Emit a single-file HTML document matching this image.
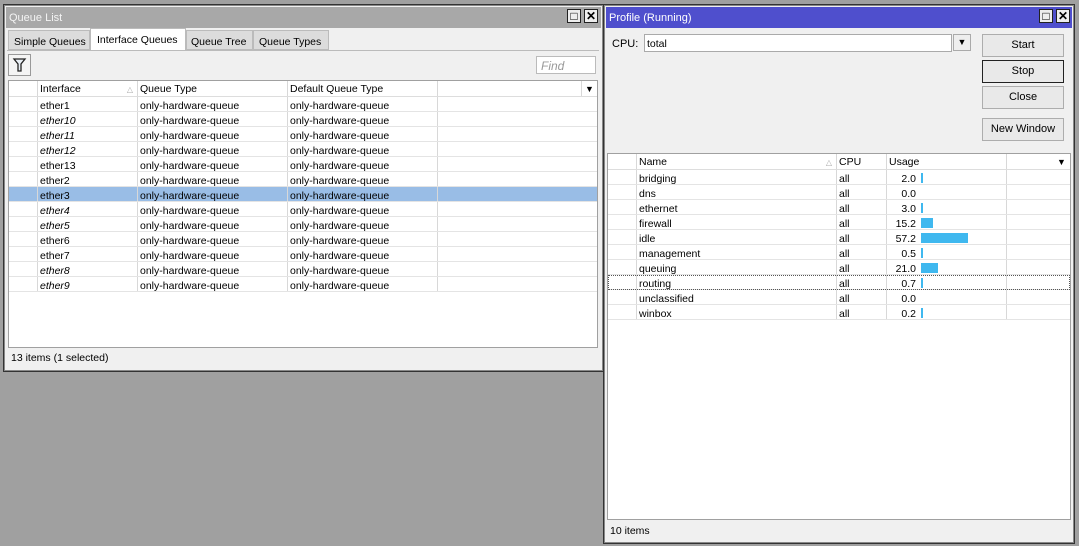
<!DOCTYPE html>
<html><head><style>
*{margin:0;padding:0;box-sizing:border-box}
body{width:1079px;height:546px;background:#a0a0a0;position:relative;overflow:hidden;font-family:"Liberation Sans",sans-serif;font-size:10.5px;color:#000}
.a{position:absolute;white-space:nowrap}
.win{position:absolute;background:#f0f0f0;border:1px solid #333;box-shadow:inset 0 0 0 1px #888}
.tb{position:absolute;left:2px;right:2px;top:2px;height:21px;color:#fff;font-size:11px;padding:5px 0 0 3px}
.wb{position:absolute;top:4px;width:14px;height:14px;border:1px solid #222;background:#eee;font-size:12px;line-height:12px;text-align:center;color:#000;font-weight:bold}
.tbl{position:absolute;background:#fff;border:1px solid #a0a0a0}
.hd{position:absolute;left:0;right:0;top:0;height:16px;background:#fff;border-bottom:1px solid #ddd}
.c{position:absolute;top:0;height:100%;border-left:1px solid #d8d8d8;padding:2px 0 0 2px;white-space:nowrap;overflow:hidden}
.r{position:absolute;left:0;right:0;height:15px;border-bottom:1px solid #e4e4e4}
.r .c{padding-top:3px}
.i{font-style:italic}
.btn{position:absolute;left:982px;width:82px;height:23px;border:1px solid #adadad;background:#e9e9e9;text-align:center;line-height:21px;font-size:11px}
.bar{position:absolute;top:3px;height:10px;background:#3fb8ef}
</style></head><body>

<div class="win" style="left:3px;top:4px;width:601px;height:368px">
 <div class="tb" style="background:#a8a8a8;color:#f4f4f4">Queue List</div>
 <div class="wb" style="left:563px">□</div><div class="wb" style="left:580px">✕</div>
</div>
<div class="a" style="left:8px;top:30px;width:82px;height:20px;background:#dcdcdc;border:1px solid #bbb;padding:5px 0 0 5px">Simple Queues</div>
<div class="a" style="left:90px;top:28px;width:96px;height:23px;background:#fff;border:1px solid #bbb;border-bottom:none;padding:5px 0 0 6px">Interface Queues</div>
<div class="a" style="left:186px;top:30px;width:67px;height:20px;background:#dcdcdc;border:1px solid #bbb;padding:5px 0 0 4px">Queue Tree</div>
<div class="a" style="left:253px;top:30px;width:76px;height:20px;background:#dcdcdc;border:1px solid #bbb;padding:5px 0 0 5px">Queue Types</div>
<div class="a" style="left:7px;top:50px;width:592px;height:1px;background:#bbb"></div>
<div class="a" style="left:8px;top:54px;width:23px;height:22px;border:1px solid #999;background:#f4f4f4">
 <svg width="21" height="20" viewBox="0 0 21 20"><path d="M5 4h11l-4 5v7h-3V9z" fill="#e8eef4" stroke="#222" stroke-width="1.3"/></svg></div>
<div class="a" style="left:536px;top:56px;width:60px;height:18px;background:#fff;border:1px solid #bbb;color:#999;font-style:italic;padding:2px 0 0 4px;font-size:12px">Find</div>

<div class="tbl" style="left:8px;top:80px;width:590px;height:268px">
 <div class="hd">
  <div class="c" style="left:0;width:28px;border:none"></div>
  <div class="c" style="left:28px;width:100px">Interface<span style="position:absolute;right:4px;color:#aaa;font-size:8px;top:4px">△</span></div>
  <div class="c" style="left:128px;width:150px">Queue Type</div>
  <div class="c" style="left:278px;width:150px">Default Queue Type</div>
  <div class="c" style="left:428px;width:144px"></div>
  <div class="c" style="left:572px;width:17px;font-size:9px;padding:3px 0 0 3px">▼</div>
 </div>
 <div id="lrows"></div>
</div>
<div class="a" style="left:11px;top:352px">13 items (1 selected)</div>

<div class="win" style="left:603px;top:4px;width:472px;height:540px">
 <div class="tb" style="background:#4f4fcd">Profile (Running)</div>
 <div class="wb" style="left:435px">□</div><div class="wb" style="left:452px">✕</div>
</div>
<div class="a" style="left:612px;top:38px;font-size:11px">CPU:</div>
<div class="a" style="left:644px;top:34px;width:308px;height:18px;background:#fff;border:1px solid #aaa;padding:3px 0 0 2px">total</div>
<div class="a" style="left:953px;top:34px;width:18px;height:17px;border:1px solid #aaa;background:#eee;text-align:center;font-size:9px;line-height:15px">▼</div>
<div class="btn" style="top:34px">Start</div>
<div class="btn" style="top:60px;border:1px solid #222">Stop</div>
<div class="btn" style="top:86px">Close</div>
<div class="btn" style="top:118px">New Window</div>

<div class="tbl" style="left:607px;top:153px;width:464px;height:367px">
 <div class="hd">
  <div class="c" style="left:0;width:28px;border:none"></div>
  <div class="c" style="left:28px;width:200px">Name<span style="position:absolute;right:4px;color:#aaa;font-size:8px;top:4px">△</span></div>
  <div class="c" style="left:228px;width:50px">CPU</div>
  <div class="c" style="left:278px;width:120px">Usage</div>
  <div class="c" style="left:398px;width:47px"></div>
  <div class="c" style="left:445px;width:18px;font-size:9px;padding:3px 0 0 4px;border:none">▼</div>
 </div>
 <div id="rrows"></div>
</div>
<div class="a" style="left:610px;top:525px">10 items</div>

<script>
var L=[["ether1",0],["ether10",1],["ether11",1],["ether12",1],["ether13",0],["ether2",0],["ether3",0,1],["ether4",1],["ether5",1],["ether6",0],["ether7",0],["ether8",1],["ether9",1]];
var h="";
L.forEach(function(r,i){
 h+='<div class="r" style="top:'+(16+i*15)+'px;'+(r[2]?'background:#99bde6':'')+'"><div class="c" style="left:0;width:28px;border:none"></div><div class="c'+(r[1]?' i':'')+'" style="left:28px;width:100px">'+r[0]+'</div><div class="c" style="left:128px;width:150px">only-hardware-queue</div><div class="c" style="left:278px;width:150px">only-hardware-queue</div><div class="c" style="left:428px;width:161px"></div></div>';
});
document.getElementById("lrows").innerHTML=h;
var R=[["bridging","2.0",2],["dns","0.0",0],["ethernet","3.0",2],["firewall","15.2",12],["idle","57.2",47],["management","0.5",2],["queuing","21.0",17],["routing","0.7",2,1],["unclassified","0.0",0],["winbox","0.2",2]];
h="";
R.forEach(function(r,i){
 h+='<div class="r" style="top:'+(16+i*15)+'px;'+(r[3]?'outline:1px dotted #555;outline-offset:-1px':'')+'"><div class="c" style="left:0;width:28px;border:none"></div><div class="c" style="left:28px;width:200px">'+r[0]+'</div><div class="c" style="left:228px;width:50px">all</div><div class="c" style="left:278px;width:120px"><span style="position:absolute;right:90px">'+r[1]+'</span>'+(r[2]?'<div class="bar" style="left:34px;width:'+r[2]+'px"></div>':'')+'</div><div class="c" style="left:398px;width:65px"></div></div>';
});
document.getElementById("rrows").innerHTML=h;
</script>
</body></html>
